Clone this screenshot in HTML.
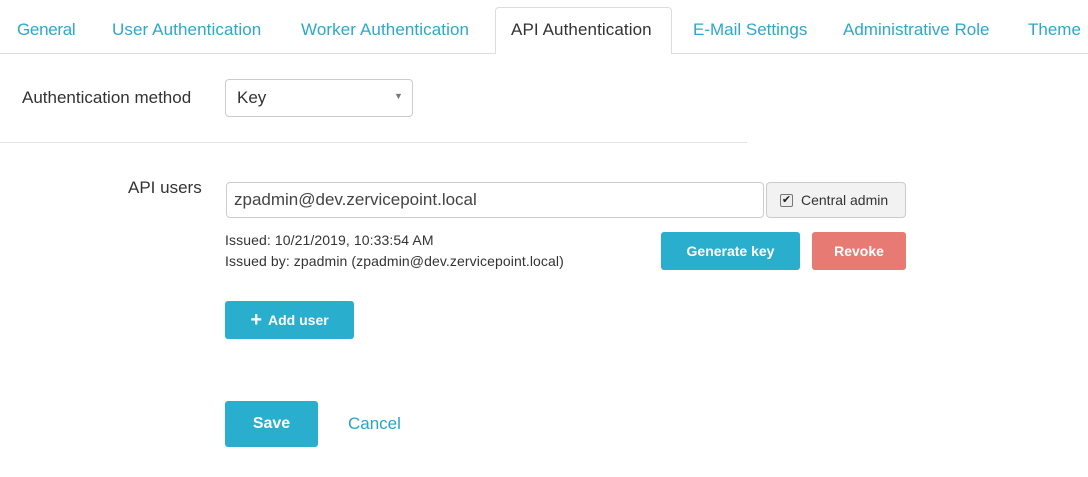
<!DOCTYPE html>
<html><head><style>
body{margin:0;width:1088px;height:477px;background:#fff;font-family:"Liberation Sans",sans-serif;color:#333;position:relative;overflow:hidden}
.a{position:absolute}
.tab{position:absolute;top:20px;font-size:17px;color:#2aa9c9;white-space:nowrap}
.btn{position:absolute;color:#fff;font-weight:bold;font-size:14px;display:flex;align-items:center;justify-content:center;border-radius:3px}
</style></head><body>
<div class="a" style="left:0;top:53px;width:1088px;height:1px;background:#ddd"></div>
<div class="a" style="left:495px;top:7px;width:177px;height:47px;border:1px solid #ddd;border-bottom:none;border-radius:4px 4px 0 0;background:#fff;box-sizing:border-box"></div>
<div class="tab" style="left:17px;letter-spacing:-0.3px">General</div>
<div class="tab" style="left:112px;letter-spacing:0.1px">User Authentication</div>
<div class="tab" style="left:301px;letter-spacing:0.1px">Worker Authentication</div>
<div class="tab" style="left:511px;color:#333;letter-spacing:0.1px">API Authentication</div>
<div class="tab" style="left:693px">E-Mail Settings</div>
<div class="tab" style="left:843px">Administrative Role</div>
<div class="tab" style="left:1028px">Theme</div>

<div class="a" style="left:22px;top:88px;font-size:17px">Authentication method</div>
<div class="a" style="left:225px;top:79px;width:188px;height:38px;border:1px solid #ccc;border-radius:4px;box-sizing:border-box"></div>
<div class="a" style="left:237px;top:88px;font-size:17px">Key</div>
<div class="a" style="left:394px;top:91px;font-size:9px;color:#777">▼</div>
<div class="a" style="left:0;top:142px;width:747px;height:1px;background:#e5e5e5"></div>

<div class="a" style="left:128px;top:178px;font-size:17px">API users</div>
<div class="a" style="left:226px;top:182px;width:538px;height:36px;border:1px solid #ccc;border-radius:4px;box-sizing:border-box"></div>
<div class="a" style="left:234px;top:190px;font-size:17px;color:#444">zpadmin@dev.zervicepoint.local</div>
<div class="a" style="left:766px;top:182px;width:140px;height:36px;border:1px solid #ccc;border-radius:4px;background:#f2f2f2;box-sizing:border-box"></div>
<div class="a" style="left:780px;top:194px;width:11px;height:11px;border:1px solid #777;border-radius:2px;background:#eee;font-size:11px;line-height:11px;text-align:center;color:#222">✔</div>
<div class="a" style="left:801px;top:192px;font-size:14px">Central admin</div>

<div class="a" style="left:225px;top:232px;font-size:14px;letter-spacing:0.1px">Issued: 10/21/2019, 10:33:54 AM</div>
<div class="a" style="left:225px;top:253px;font-size:14px;letter-spacing:0.1px">Issued by: zpadmin (zpadmin@dev.zervicepoint.local)</div>
<div class="btn" style="left:661px;top:232px;width:139px;height:38px;background:#2aaecd">Generate key</div>
<div class="btn" style="left:812px;top:232px;width:94px;height:38px;background:#e77a72">Revoke</div>
<div class="btn" style="left:225px;top:301px;width:129px;height:38px;background:#2aaecd"><span style="font-size:20px;margin-right:6px">+</span>Add user</div>
<div class="btn" style="left:225px;top:401px;width:93px;height:46px;background:#2aaecd;font-size:16px">Save</div>
<div class="a" style="left:348px;top:414px;font-size:17px;color:#2aa3c8">Cancel</div>
</body></html>
